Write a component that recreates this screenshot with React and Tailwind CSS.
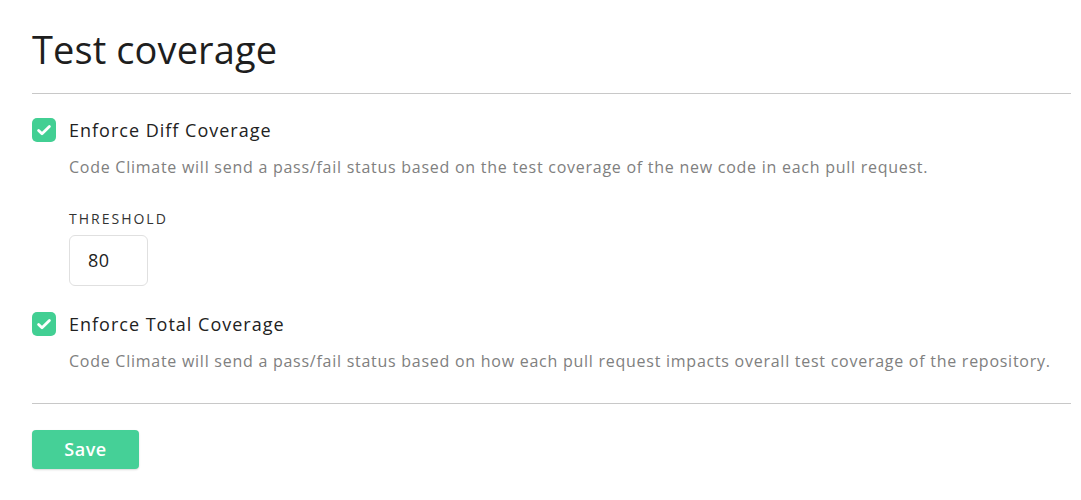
import React from "react";

function Check() {
  return (
    <span className="flex h-[24px] w-[24px] shrink-0 items-center justify-center rounded-[5px] bg-[#42cf93]">
      <svg width="16" height="16" viewBox="0 0 16 16" fill="none">
        <path d="M2.6 8.4l3.4 3.3L13.4 4.4" stroke="#fff" strokeWidth="2.8" strokeLinecap="round" strokeLinejoin="round" />
      </svg>
    </span>
  );
}

function Option({ label, desc, children }) {
  return (
    <div>
      <label className="flex h-[24px] items-center gap-[13px]">
        <Check />
        <span className="text-[18px] leading-[24px] tracking-[1px] text-[#222]">{label}</span>
      </label>
      <p className="mt-[13px] whitespace-nowrap pl-[37px] text-[16px] leading-[24px] tracking-[0.74px] text-[#808080]">{desc}</p>
      {children}
    </div>
  );
}

export default function App() {
  return (
    <div className="bg-white px-[32px] pt-[21px] pb-6 text-[#222]" style={{ fontFamily: "'Open Sans', Lato, sans-serif" }}>
      <h1 className="text-[38px] leading-[56px] tracking-[0.1px] text-[#1e1e1e]">Test coverage</h1>
      <div className="mt-[16px] h-px w-[1039px] bg-[#c8c8c8]" />
      <div className="mt-[24px]">
        <Option
          label="Enforce Diff Coverage"
          desc="Code Climate will send a pass/fail status based on the test coverage of the new code in each pull request."
        >
          <div className="mt-[32px] pl-[37px]">
            <div className="text-[14px] leading-[16px] tracking-[2px] text-[#333]">THRESHOLD</div>
            <div className="mt-[8px] flex h-[51px] w-[79px] items-center rounded-[6px] border border-[#e0e0e0] pl-[18px] text-[18px] tracking-[0.5px] text-[#222]">
              80
            </div>
          </div>
        </Option>
        <div className="mt-[26px]">
          <Option
            label="Enforce Total Coverage"
            desc="Code Climate will send a pass/fail status based on how each pull request impacts overall test coverage of the repository."
          />
        </div>
      </div>
      <div className="mt-[30px] h-px w-[1039px] bg-[#c8c8c8]" />
      <button className="mt-[26px] h-[39px] w-[107px] rounded-[4px] bg-[#45d097] text-[18px] font-semibold tracking-[0.5px] text-white shadow-[0_1px_2px_rgba(0,0,0,0.15)]">
        Save
      </button>
    </div>
  );
}
